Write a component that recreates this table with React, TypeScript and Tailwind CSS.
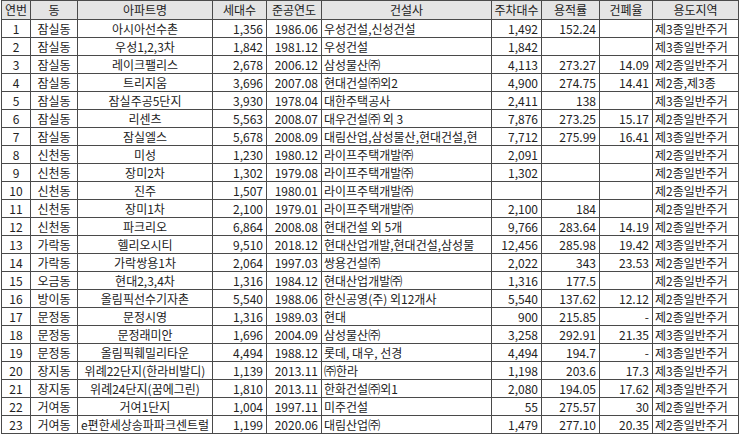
import React from 'react';

type Row = [string, string, string, string, string, string, string, string, string, string];

const ROWS: Row[] = [
    ['1', '잠실동', '아시아선수촌', '1,356', '1986.06', '우성건설,신성건설', '1,492', '152.24', '', '제3종일반주거'],
    ['2', '잠실동', '우성1,2,3차', '1,842', '1981.12', '우성건설', '1,842', '', '', '제3종일반주거'],
    ['3', '잠실동', '레이크팰리스', '2,678', '2006.12', '삼성물산㈜', '4,113', '273.27', '14.09', '제2종일반주거'],
    ['4', '잠실동', '트리지움', '3,696', '2007.08', '현대건설㈜외2', '4,900', '274.75', '14.41', '제2종,제3종'],
    ['5', '잠실동', '잠실주공5단지', '3,930', '1978.04', '대한주택공사', '2,411', '138', '', '제3종일반주거'],
    ['6', '잠실동', '리센츠', '5,563', '2008.07', '대우건설㈜ 외 3', '7,876', '273.25', '15.17', '제2종일반주거'],
    ['7', '잠실동', '잠실엘스', '5,678', '2008.09', '대림산업,삼성물산,현대건설,현', '7,712', '275.99', '16.41', '제3종일반주거'],
    ['8', '신천동', '미성', '1,230', '1980.12', '라이프주택개발㈜', '2,091', '', '', '제2종일반주거'],
    ['9', '신천동', '장미2차', '1,302', '1979.08', '라이프주택개발㈜', '1,302', '', '', '제2종일반주거'],
    ['10', '신천동', '진주', '1,507', '1980.01', '라이프주택개발㈜', '', '', '', '제2종일반주거'],
    ['11', '신천동', '장미1차', '2,100', '1979.01', '라이프주택개발㈜', '2,100', '184', '', '제2종일반주거'],
    ['12', '신천동', '파크리오', '6,864', '2008.08', '현대건설 외 5개', '9,766', '283.64', '14.19', '제2종일반주거'],
    ['13', '가락동', '헬리오시티', '9,510', '2018.12', '현대산업개발,현대건설,삼성물', '12,456', '285.98', '19.42', '제3종일반주거'],
    ['14', '가락동', '가락쌍용1차', '2,064', '1997.03', '쌍용건설㈜', '2,022', '343', '23.53', '제2종일반주거'],
    ['15', '오금동', '현대2,3,4차', '1,316', '1984.12', '현대산업개발㈜', '1,316', '177.5', '', '제2종일반주거'],
    ['16', '방이동', '올림픽선수기자촌', '5,540', '1988.06', '한신공영(주) 외12개사', '5,540', '137.62', '12.12', '제2종일반주거'],
    ['17', '문정동', '문정시영', '1,316', '1989.03', '현대', '900', '215.85', '-', '제2종일반주거'],
    ['18', '문정동', '문정래미안', '1,696', '2004.09', '삼성물산㈜', '3,258', '292.91', '21.35', '제3종일반주거'],
    ['19', '문정동', '올림픽훼밀리타운', '4,494', '1988.12', '롯데, 대우, 선경', '4,494', '194.7', '-', '제3종일반주거'],
    ['20', '장지동', '위례22단지(한라비발디)', '1,139', '2013.11', '㈜한라', '1,198', '203.6', '17.3', '제3종일반주거'],
    ['21', '장지동', '위례24단지(꿈에그린)', '1,810', '2013.11', '한화건설㈜외1', '2,080', '194.05', '17.62', '제3종일반주거'],
    ['22', '거여동', '거여1단지', '1,004', '1997.11', '미주건설', '55', '275.57', '30', '제2종일반주거'],
    ['23', '거여동', 'e편한세상송파파크센트럴', '1,199', '2020.06', '대림산업㈜', '1,479', '277.10', '20.35', '제2종일반주거'],
];

const HEADERS = ['연번', '동', '아파트명', '세대수', '준공연도', '건설사', '주차대수', '용적률', '건폐율', '용도지역'];

// alignment per column
const ALIGN = [
    'text-center',
    'text-center',
    'text-center',
    'text-right pr-[3px]',
    'text-right pr-[3px]',
    'text-left pl-[2px]',
    'text-right pr-[3px]',
    'text-right pr-[3px]',
    'text-right pr-[3px]',
    'text-left pl-[2px]',
];

export default function App() {
    return (
        <div
            className="min-h-screen bg-white pl-px text-[#222]"
            style={{ fontFamily: '"Noto Sans CJK KR", "Noto Sans", sans-serif' }}
        >
            <table className="table-fixed border-collapse text-[12px] leading-none">
                <colgroup>
                    <col className="w-[29px]" />
                    <col className="w-[47px]" />
                    <col className="w-[135px]" />
                    <col className="w-[54px]" />
                    <col className="w-[55px]" />
                    <col className="w-[170px]" />
                    <col className="w-[50px]" />
                    <col className="w-[58px]" />
                    <col className="w-[53px]" />
                    <col className="w-[86px]" />
                </colgroup>
                <thead>
                    <tr className="h-[19px] bg-[#e4e4e4]">
                        {HEADERS.map((h) => (
                            <th
                                key={h}
                                className="overflow-hidden whitespace-nowrap border border-[#4a4a4a] p-0 text-center font-normal"
                            >
                                {h}
                            </th>
                        ))}
                    </tr>
                </thead>
                <tbody>
                    {ROWS.map((row) => (
                        <tr key={row[0]} className="h-[18px]">
                            {row.map((cell, i) => (
                                <td
                                    key={i}
                                    className={`overflow-hidden whitespace-nowrap border border-[#4a4a4a] p-0 ${ALIGN[i]}`}
                                >
                                    {cell}
                                </td>
                            ))}
                        </tr>
                    ))}
                </tbody>
            </table>
        </div>
    );
}
